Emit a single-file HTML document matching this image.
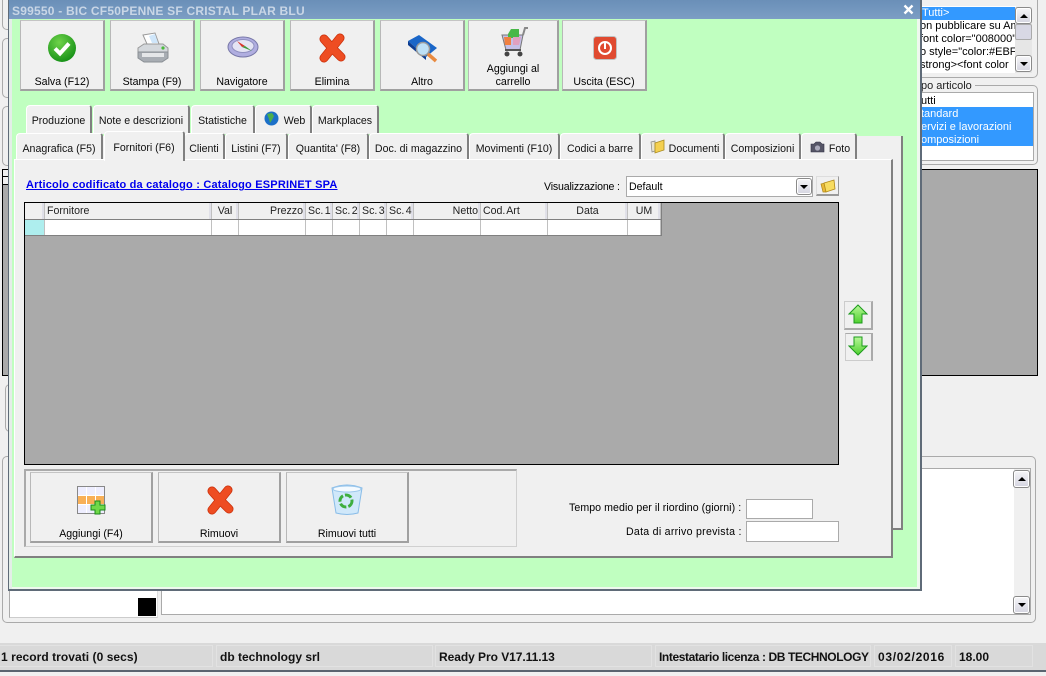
<!DOCTYPE html>
<html><head><meta charset="utf-8"><style>
html,body{margin:0;padding:0}
body{width:1046px;height:676px;overflow:hidden;background:#f0f0f0;position:relative;font:10.6px "Liberation Sans",sans-serif;color:#000}
div,span,svg,a{position:absolute;box-sizing:border-box}
.t{white-space:nowrap;line-height:13px}
.c{text-align:center}
.tab{background:#f0f0f0;border-left:1px solid #fff;border-top:1px solid #fff;border-right:2px solid #808080;border-top-left-radius:4px;border-top-right-radius:3px;text-align:center;white-space:nowrap;line-height:13px;color:#111}
.btn{background:#f0f0f0;border-right:2px solid #a0a0a0;border-bottom:2px solid #a0a0a0;border-left:1px solid #b8b8b8;border-top:1px solid #c4c4c4}
.btn span{left:0;right:0;text-align:center;line-height:13px;white-space:nowrap}
.sb{background:linear-gradient(#f6f6f8,#d4d4e0);border:1px solid #8a8a8a;border-radius:3px;box-shadow:inset 0 0 0 1px #fff}
.sb:after{content:"";position:absolute;left:50%;top:50%;margin:-2px 0 0 -4px;border-left:4px solid transparent;border-right:4px solid transparent}
.up:after{border-bottom:4px solid #000}
.dn:after{border-top:4px solid #000}
.hd{top:203px;height:16px;background:#f0f0f0;border-right:1px solid #c0c0c0;line-height:17px;white-space:nowrap;padding:0 2px;color:#222;box-shadow:inset -2px 0 0 #e0e0e8;word-spacing:-1.5px}
.cell{top:220px;height:15px;background:#fff;border-right:1px solid #c0c0c0}
.st{top:645px;height:22px;background:#d9d9d9;border:1px solid #e2e2e2;font-weight:bold;line-height:23px;white-space:nowrap;padding-left:3px;color:#111;font-size:12px}
.grp{border:1px solid #aaa;border-radius:5px}
.lb{font-size:11px}
</style></head><body>

<!-- background: left side -->
<div class="grp" style="left:2px;top:-10px;width:12px;height:40px"></div>
<div class="grp" style="left:2px;top:38px;width:12px;height:60px"></div>
<div class="grp" style="left:2px;top:106px;width:12px;height:60px"></div>
<div style="left:2px;top:169px;width:12px;height:207px;background:#aaa;border:1px solid #000"></div>
<div style="left:2px;top:169px;width:7px;height:8px;background:#f0f0f0;border:1px solid #000"></div>
<div style="left:2px;top:176px;width:7px;height:9px;background:#f0f0f0;border:1px solid #000"></div>
<div class="grp" style="left:5px;top:384px;width:10px;height:48px"></div>
<div class="grp" style="left:2px;top:456px;width:1034px;height:167px"></div>
<div style="left:9px;top:590px;width:149px;height:28px;background:#fff;border-left:1px solid #aaa;border-bottom:1px solid #ccc;border-right:1px solid #ddd"></div>
<div style="left:138px;top:598px;width:18px;height:18px;background:#000"></div>
<div style="left:161px;top:468px;width:870px;height:147px;background:#fff;border:1px solid #aaa"></div>
<div style="left:1014px;top:469px;width:16px;height:145px;background:#f0f0f0"></div>
<div class="sb up" style="left:1013px;top:470px;width:17px;height:18px"></div>
<div class="sb dn" style="left:1013px;top:596px;width:17px;height:18px"></div>

<!-- background: right side -->
<div class="grp" style="left:900px;top:-10px;width:138px;height:88px"></div>
<div style="left:921px;top:6px;width:95px;height:67px;background:#fff"></div>
<div style="left:921px;top:7px;width:94px;height:13px;background:#3399ff"></div>
<div class="t lb" style="left:922px;top:7px;color:#fff">Tutti&gt;</div>
<div style="left:921px;top:20px;width:94px;height:52px;overflow:hidden;line-height:13px;white-space:nowrap">
<div class="t lb" style="left:-1px;top:0">on pubblicare su Am</div>
<div class="t lb" style="left:-1px;top:13px">font color="008000"</div>
<div class="t lb" style="left:-1px;top:26px">o style="color:#EBF</div>
<div class="t lb" style="left:-1px;top:39px">strong&gt;&lt;font color</div>
</div>
<div style="left:1015px;top:7px;width:17px;height:66px;background:#e6e6e6"></div>
<div class="sb up" style="left:1015px;top:7px;width:17px;height:17px"></div>
<div style="left:1015px;top:24px;width:17px;height:16px;background:#d8d8e4;border:1px solid #aaa;border-radius:2px"></div>
<div class="sb dn" style="left:1015px;top:55px;width:17px;height:17px"></div>

<div class="grp" style="left:900px;top:85px;width:138px;height:80px"></div>
<div style="left:921px;top:79px;width:54px;height:13px;background:#f0f0f0"></div>
<div class="t lb" style="left:921px;top:80px;color:#222">po articolo</div>
<div style="left:921px;top:92px;width:113px;height:69px;background:#fff;border:1px solid #aaa;border-left:0"></div>
<div class="t lb" style="left:921px;top:95px">utti</div>
<div style="left:921px;top:107px;width:112px;height:39px;background:#3399ff"></div>
<div class="t lb" style="left:921px;top:108px;color:#fff">tandard</div>
<div class="t lb" style="left:921px;top:121px;color:#fff">ervizi e lavorazioni</div>
<div class="t lb" style="left:921px;top:134px;color:#fff">omposizioni</div>
<div style="left:915px;top:169px;width:123px;height:207px;background:#aaa;border:1px solid #000"></div>

<!-- status bar -->
<div style="left:0;top:643px;width:1046px;height:27px;background:#d9d9d9"></div>
<div style="left:0;top:670px;width:1046px;height:2px;background:#5a6470"></div>
<div class="st" style="left:-3px;width:216px;letter-spacing:.05px">1 record trovati (0 secs)</div>
<div class="st" style="left:216px;width:217px">db technology srl</div>
<div class="st" style="left:435px;width:217px;letter-spacing:-.05px">Ready Pro V17.11.13</div>
<div class="st" style="left:655px;width:216px;letter-spacing:-.4px">Intestatario licenza : DB TECHNOLOGY</div>
<div class="st" style="left:874px;width:78px;letter-spacing:.7px">03/02/2016</div>
<div class="st" style="left:955px;width:78px">18.00</div>

<!-- window -->
<div style="left:8px;top:0;width:914px;height:591px;background:#c0ffc0;border:1px solid #5f6b78;border-top:0;border-width:0 2px 2px 1px;box-shadow:inset 3px 0 0 #e4eee8,inset -3px -2px 0 #eef8ee"></div>
<div style="left:9px;top:0;width:911px;height:19px;background:linear-gradient(#6a8fb8,#7c9ec4)"></div>
<div class="t" style="left:12px;top:5px;font-weight:bold;font-size:12px;color:#c9d6e6;letter-spacing:.22px">S99550 - BIC CF50PENNE SF CRISTAL PLAR BLU</div>
<svg width="11" height="11" viewBox="0 0 11 11" style="left:903px;top:4px"><path d="M1.5 1.5L9.5 9.5M9.5 1.5L1.5 9.5" stroke="#fff" stroke-width="2.4"/></svg>

<svg width="0" height="0" style="left:0;top:0"><defs>
<radialGradient id="g1" cx=".4" cy=".3" r=".8"><stop offset="0" stop-color="#6fd34a"/><stop offset="1" stop-color="#0d8a12"/></radialGradient>
<linearGradient id="ga" x1="0" y1="0" x2="0" y2="1"><stop offset="0" stop-color="#b8f898"/><stop offset="1" stop-color="#50d030"/></linearGradient>
</defs></svg>

<!-- toolbar buttons -->
<div class="btn" style="left:20px;top:20px;width:85px;height:71px"><span style="top:55px">Salva (F12)</span>
<svg width="30" height="30" viewBox="0 0 30 30" style="left:26px;top:12px"><circle cx="15" cy="15" r="14" fill="url(#g1)"/><path d="M8 15.5l5 5 9-10" fill="none" stroke="#fff" stroke-width="4"/></svg></div>
<div class="btn" style="left:110px;top:20px;width:85px;height:71px"><span style="top:55px">Stampa (F9)</span>
<svg width="32" height="32" viewBox="0 0 32 32" style="left:26px;top:11px"><path d="M6 3l12-2 4 11H10z" fill="#fff" stroke="#999"/><path d="M12 4l6-2 3 9h-6z" fill="#cfe6fa"/><path d="M1 16l6-4h19l5 4v6H1z" fill="#d4d8dc" stroke="#999"/><path d="M1 20h30v6l-6 4H7l-6-4z" fill="#a8adb3" stroke="#8a8f95"/><path d="M5 21h22v4H5z" fill="#e4e6e8"/><circle cx="26" cy="16" r="1.6" fill="#4aba3a"/></svg></div>
<div class="btn" style="left:200px;top:20px;width:85px;height:71px"><span style="top:55px">Navigatore</span>
<svg width="32" height="22" viewBox="0 0 32 22" style="left:26px;top:15px"><ellipse cx="16" cy="11" rx="15" ry="10" fill="#b0aee0" stroke="#7878a8"/><ellipse cx="16" cy="10" rx="11" ry="6.5" fill="#e4e4f4" stroke="#9090c0"/><path d="M10 5l8 5-3 1z" fill="#d8362a"/><path d="M15 11l3-1 7 5z" fill="#3d9a3a"/></svg></div>
<div class="btn" style="left:290px;top:20px;width:85px;height:71px"><span style="top:55px">Elimina</span>
<svg width="30" height="30" viewBox="0 0 30 30" style="left:26px;top:12px"><path d="M7 6L15 15M23 5L15 15M15 15L7 25M15 15L24 24" fill="none" stroke="#c92e08" stroke-width="9" stroke-linecap="round"/><path d="M7 6L15 15M23 5L15 15M15 15L7 25M15 15L24 24" fill="none" stroke="#ee4d22" stroke-width="7.5" stroke-linecap="round"/></svg></div>
<div class="btn" style="left:380px;top:20px;width:85px;height:71px"><span style="top:55px">Altro</span>
<svg width="32" height="30" viewBox="0 0 32 30" style="left:26px;top:13px"><path d="M1 7L12 1l18 13-11 9z" fill="#1a66c8"/><path d="M1 7l0 4 18 15 0-3z" fill="#0c3c90"/><circle cx="16" cy="15" r="6.5" fill="#bde0f6" stroke="#9a9a9a" stroke-width="1.5"/><path d="M21 20l8 7" stroke="#e88a40" stroke-width="3.5"/></svg></div>
<div class="btn" style="left:468px;top:20px;width:91px;height:71px"><span style="top:42px">Aggiungi al</span><span style="top:55px">carrello</span>
<svg width="28" height="32" viewBox="0 0 28 32" style="left:31px;top:4px"><path d="M2 10h21l-3 15H6z" fill="#c4c0e8" stroke="#777"/><path d="M8 9l3-5h8v9H8z" fill="#48b848"/><path d="M4 12h7v8H5z" fill="#f08040"/><path d="M13 12h8l-2 8h-6z" fill="#e0a0c0"/><path d="M23 10l2-7h3" fill="none" stroke="#888" stroke-width="2"/><path d="M5 25h16" stroke="#555" stroke-width="2"/><circle cx="7" cy="29" r="2.5" fill="#444"/><circle cx="20" cy="29" r="2.5" fill="#444"/></svg></div>
<div class="btn" style="left:562px;top:20px;width:85px;height:71px"><span style="top:55px">Uscita (ESC)</span>
<svg width="24" height="24" viewBox="0 0 24 24" style="left:30px;top:15px"><rect x=".5" y=".5" width="23" height="23" rx="3" fill="#e04a30" stroke="#c0c0c0"/><circle cx="12" cy="12" r="6" fill="none" stroke="#fff" stroke-width="2"/><path d="M12 7v6" stroke="#fff" stroke-width="2"/></svg></div>

<!-- rear panel -->
<div style="left:16px;top:136px;width:887px;height:394px;background:#f0f0f0;border-right:2px solid #808080;border-bottom:2px solid #808080"></div>

<!-- tabs row 1 -->
<div class="tab" style="left:26px;top:105px;width:66px;height:29px;padding-top:9px">Produzione</div>
<div class="tab" style="left:93px;top:105px;width:97px;height:29px;padding-top:9px">Note e descrizioni</div>
<div class="tab" style="left:191px;top:105px;width:64px;height:29px;padding-top:9px">Statistiche</div>
<div class="tab" style="left:255px;top:105px;width:57px;height:29px;padding:9px 0 0 23px">Web
<svg width="15" height="15" viewBox="0 0 15 15" style="left:8px;top:5px"><circle cx="7.5" cy="7.5" r="7" fill="#1c70c8"/><path d="M3 3l5-1 2 3-2 4-2 3-1-4z" fill="#4cae4c"/></svg></div>
<div class="tab" style="left:312px;top:105px;width:67px;height:29px;padding-top:9px">Markplaces</div>

<!-- tabs row 2 -->
<div class="tab" style="left:16px;top:133px;width:87px;height:28px;padding-top:9px">Anagrafica (F5)</div>
<div class="tab" style="left:184px;top:133px;width:41px;height:28px;padding-top:9px">Clienti</div>
<div class="tab" style="left:225px;top:133px;width:63px;height:28px;padding-top:9px">Listini (F7)</div>
<div class="tab" style="left:288px;top:133px;width:81px;height:28px;padding-top:9px">Quantita' (F8)</div>
<div class="tab" style="left:369px;top:133px;width:100px;height:28px;padding-top:9px">Doc. di magazzino</div>
<div class="tab" style="left:469px;top:133px;width:91px;height:28px;padding-top:9px">Movimenti (F10)</div>
<div class="tab" style="left:560px;top:133px;width:81px;height:28px;padding-top:9px">Codici a barre</div>
<div class="tab" style="left:641px;top:133px;width:84px;height:28px;padding:9px 0 0 23px">Documenti
<svg width="15" height="15" viewBox="0 0 15 15" style="left:8px;top:5px"><path d="M1 3l4-1v10l-3 1z" fill="#e8e4d0" stroke="#888" stroke-width=".7"/><path d="M5 4l9-3v10l-9 3z" fill="#f4d050" stroke="#a88a20" stroke-width=".8"/></svg></div>
<div class="tab" style="left:725px;top:133px;width:76px;height:28px;padding-top:9px">Composizioni</div>
<div class="tab" style="left:801px;top:133px;width:56px;height:28px;padding:9px 0 0 22px">Foto
<svg width="15" height="12" viewBox="0 0 15 12" style="left:8px;top:7px"><path d="M1 3h3l2-2h4l2 2h2v8H1z" fill="#556" stroke="#334" stroke-width=".6"/><circle cx="7.5" cy="7" r="2.6" fill="#aab"/></svg></div>

<!-- main panel -->
<div style="left:14px;top:159px;width:879px;height:399px;background:#f0f0f0;border-left:1px solid #fff;border-top:1px solid #fff;border-right:2px solid #808080;border-bottom:2px solid #808080"></div>
<div class="tab" style="left:104px;top:131px;width:81px;height:30px;padding-top:10px;border-bottom:0">Fornitori (F6)</div>

<a class="t" style="left:26px;top:179px;font-weight:bold;color:#0000ee;text-decoration:underline;font-size:11px;letter-spacing:.2px">Articolo codificato da catalogo : Catalogo ESPRINET SPA</a>
<div class="t" style="left:544px;top:181px;letter-spacing:-.17px">Visualizzazione :</div>
<div style="left:626px;top:176px;width:187px;height:21px;background:#fff;border:1px solid #aaa;line-height:21px;padding-left:2px">Default</div>
<div class="sb dn" style="left:796px;top:178px;width:16px;height:17px"></div>
<div style="left:816px;top:176px;width:23px;height:20px;background:#f0f0f0;border-right:1px solid #999;border-bottom:2px solid #999;border-top:1px solid #ddd;border-left:1px solid #ddd"></div>
<svg width="16" height="14" viewBox="0 0 16 14" style="left:820px;top:179px"><path d="M1 5l4-1 1 9 -3 0z" fill="#e8b838" stroke="#b08818" stroke-width=".7"/><path d="M4 4l10-3 1 9-9 3z" fill="#f8dc60" stroke="#b08818" stroke-width=".8"/></svg>

<!-- grid -->
<div style="left:24px;top:202px;width:815px;height:263px;background:#aaa;border:1px solid #000"></div>
<div style="left:25px;top:203px;width:637px;height:33px;background:#f0f0f0;border-right:2px solid #808080;border-bottom:2px solid #808080"></div>
<div class="hd" style="left:25px;width:20px"></div>
<div class="hd" style="left:45px;width:167px">Fornitore</div>
<div class="hd c" style="left:212px;width:27px">Val</div>
<div class="hd" style="left:239px;width:67px;text-align:right">Prezzo</div>
<div class="hd c" style="left:306px;width:27px">Sc. 1</div>
<div class="hd c" style="left:333px;width:27px">Sc. 2</div>
<div class="hd c" style="left:360px;width:27px">Sc. 3</div>
<div class="hd c" style="left:387px;width:27px">Sc. 4</div>
<div class="hd" style="left:414px;width:67px;text-align:right">Netto</div>
<div class="hd" style="left:481px;width:67px">Cod. Art</div>
<div class="hd c" style="left:548px;width:80px">Data</div>
<div class="hd c" style="left:628px;width:33px">UM</div>
<div style="left:25px;top:219px;width:635px;height:1px;background:#808080"></div>
<div class="cell" style="left:25px;width:20px;background:#aeeeee"></div>
<div class="cell" style="left:45px;width:167px"></div>
<div class="cell" style="left:212px;width:27px"></div>
<div class="cell" style="left:239px;width:67px"></div>
<div class="cell" style="left:306px;width:27px"></div>
<div class="cell" style="left:333px;width:27px"></div>
<div class="cell" style="left:360px;width:27px"></div>
<div class="cell" style="left:387px;width:27px"></div>
<div class="cell" style="left:414px;width:67px"></div>
<div class="cell" style="left:481px;width:67px"></div>
<div class="cell" style="left:548px;width:80px"></div>
<div class="cell" style="left:628px;width:33px"></div>

<!-- arrows -->
<div style="left:844px;top:301px;width:29px;height:29px;background:#f0f0f0;border:1px solid #ccc;border-right:2px solid #aaa;border-bottom:2px solid #aaa"></div>
<svg width="20" height="20" viewBox="0 0 20 20" style="left:848px;top:304px"><path d="M10 1l9 9h-5v9H6v-9H1z" fill="url(#ga)" stroke="#1c9a1c"/></svg>
<div style="left:845px;top:333px;width:28px;height:28px;background:#f0f0f0;border:1px solid #ccc;border-right:2px solid #aaa;border-top:1px solid #aaa"></div>
<svg width="20" height="20" viewBox="0 0 20 20" style="left:848px;top:336px"><path d="M6 1h8v9h5l-9 9-9-9h5z" fill="url(#ga)" stroke="#1c9a1c"/></svg>

<!-- bottom group -->
<div style="left:24px;top:469px;width:493px;height:78px;border:1px solid #d0d0d0;border-top:2px solid #aaa;border-left:2px solid #aaa"></div>
<div class="btn" style="left:30px;top:472px;width:123px;height:71px"><span style="top:55px">Aggiungi (F4)</span>
<svg width="30" height="30" viewBox="0 0 30 30" style="left:46px;top:13px"><rect x=".5" y=".5" width="27" height="27" fill="#eef" stroke="#888"/><rect x="1" y="10" width="26" height="8" fill="#f8b058"/><path d="M9.5 1v26M18.5 1v26M1 9.5h26M1 18.5h26" stroke="#fff" stroke-width="1"/><path d="M19 16h5v4h5v5h-5v4h-5v-4h-4v-5h4z" fill="#70d848" stroke="#1a8a1a" transform="translate(-1,-1)"/></svg></div>
<div class="btn" style="left:158px;top:472px;width:123px;height:71px"><span style="top:55px">Rimuovi</span>
<svg width="30" height="30" viewBox="0 0 30 30" style="left:46px;top:12px"><path d="M7 6L15 15M23 5L15 15M15 15L7 25M15 15L24 24" fill="none" stroke="#c92e08" stroke-width="9" stroke-linecap="round"/><path d="M7 6L15 15M23 5L15 15M15 15L7 25M15 15L24 24" fill="none" stroke="#ee4d22" stroke-width="7.5" stroke-linecap="round"/></svg></div>
<div class="btn" style="left:286px;top:472px;width:123px;height:71px"><span style="top:55px">Rimuovi tutti</span>
<svg width="32" height="32" viewBox="0 0 32 32" style="left:44px;top:11px"><path d="M1 4q15-6 30 0l-4 25q-11 3-22 0z" fill="#d0e8fa" stroke="#88bce8"/><ellipse cx="16" cy="5" rx="14" ry="3" fill="#f4faff" stroke="#9cc8ec"/><circle cx="15" cy="17" r="6" fill="none" stroke="#3eae3e" stroke-width="3" stroke-dasharray="7 2"/></svg></div>

<div class="t" style="left:569px;top:502px;letter-spacing:.07px">Tempo medio per il riordino (giorni) :</div>
<div style="left:746px;top:499px;width:67px;height:20px;background:#fff;border:1px solid #aaa"></div>
<div class="t" style="left:626px;top:526px;letter-spacing:.27px">Data di arrivo prevista :</div>
<div style="left:746px;top:521px;width:93px;height:21px;background:#fff;border:1px solid #aaa"></div>
</body></html>
